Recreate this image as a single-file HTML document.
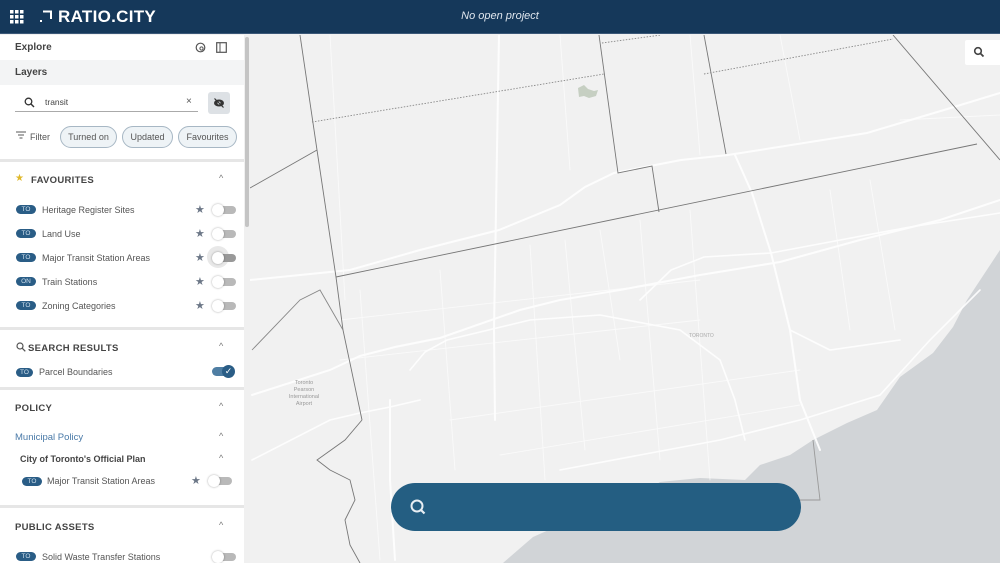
<!DOCTYPE html>
<html><head><meta charset="utf-8"><style>
*{box-sizing:border-box;margin:0;padding:0}
body{width:1000px;height:563px;overflow:hidden;font-family:"Liberation Sans",sans-serif;background:#f1f1f1;position:relative}
.hdr{position:absolute;left:0;top:0;width:1000px;height:34px;background:#15385a;border-bottom:1px solid #3b5878}
.hdr .t{position:absolute;left:0;width:1000px;top:10px;text-align:center;color:#dfe6ee;font-size:11px;font-style:italic}
.logo{position:absolute;left:58px;top:7px;color:#fff;font-weight:bold;font-size:17px;letter-spacing:0.3px}
.side{position:absolute;left:0;top:35px;width:250px;height:528px;background:#fff;overflow:hidden}
.sb{position:absolute;left:244px;top:0;width:6px;height:528px;background:#f0f0f0}
.sb div{position:absolute;left:1px;top:2px;width:4px;height:190px;background:#c4c4c4;border-radius:2px}
.a{position:absolute;font-size:9px;color:#555}
.h{position:absolute;font-size:9.5px;font-weight:bold;color:#444;letter-spacing:0.3px}
.tag{position:absolute;width:20px;height:9px;border-radius:5px;background:#2a5d86;color:#cfe0ee;font-size:6.5px;text-align:center;line-height:9.5px}
.tg{position:absolute;width:24px;height:10px}
.tg .tr{position:absolute;left:4px;top:1px;width:20px;height:8px;border-radius:4px;background:#b9b9b9}
.tg .kn{position:absolute;left:0;top:-1px;width:12px;height:12px;border-radius:6px;background:#fff;box-shadow:0 0 2px rgba(0,0,0,.35)}
.star{position:absolute;color:#6c7787;font-size:11px}
.car{position:absolute;left:219px;font-size:9px;color:#777}
.sep{position:absolute;left:0;width:244px;height:3px;background:#e6e6e6}
.chip{position:absolute;height:22px;border:1.5px solid #a7b7c4;border-radius:11px;background:#eef3f6;font-size:9px;color:#555;text-align:center;padding-top:5px;line-height:10px}
</style></head><body>
<svg style="position:absolute;left:250px;top:35px" width="750" height="528" viewBox="250 35 750 528">
<rect x="250" y="35" width="750" height="528" fill="#f1f1f1"/>
<polygon points="1000,250 967,300 953,327 933,353 900,377 877,410 847,423 813,440 790,455 760,465 745,480 700,478 660,482 640,495 600,515 560,525 533,537 503,563 1000,563" fill="#d1d4d7"/>
<g stroke="#fff" fill="none" stroke-linecap="round" opacity="0.9">
<polyline stroke-width="2" points="252,395 330,370 360,356 395,347 440,338 520,310 560,300 620,290 700,275 780,262 860,240 940,220 1000,200"/>
<polyline stroke-width="2" points="250,280 350,270 420,250 499,230 560,205 585,187 614,173 681,160 728,155 867,133 944,110 1000,93"/>
<polyline stroke-width="2" points="499,35 497,150 494,330 495,420"/>
<polyline stroke-width="2" points="735,155 752,193 771,253 790,330 800,400 820,450"/>
<polyline stroke-width="1.6" points="640,300 671,270 704,257 771,253 910,227 1000,213"/>
<polyline stroke-width="2" points="390,400 390,480 395,560"/>
<polyline stroke-width="1.6" points="410,370 425,352 447,340 530,320 600,315 680,330 720,360 735,400 745,440"/>
<polyline stroke-width="1.6" points="252,460 330,420 360,413 390,407 420,400"/>
<polyline stroke-width="1.6" points="560,470 640,455 720,440 800,420 880,395 930,340 980,290"/>
<polyline stroke-width="1.6" points="790,330 830,350 900,340"/>
<g stroke-width="0.9" opacity="0.7">
<line x1="330" y1="35" x2="345" y2="300"/><line x1="360" y1="290" x2="380" y2="560"/>
<line x1="440" y1="270" x2="455" y2="470"/><line x1="530" y1="245" x2="545" y2="480"/>
<line x1="565" y1="240" x2="585" y2="450"/><line x1="600" y1="230" x2="620" y2="360"/>
<line x1="640" y1="220" x2="660" y2="460"/><line x1="690" y1="210" x2="710" y2="480"/>
<line x1="830" y1="190" x2="850" y2="330"/><line x1="870" y1="180" x2="895" y2="330"/>
<line x1="340" y1="320" x2="700" y2="280"/><line x1="340" y1="360" x2="700" y2="320"/>
<line x1="450" y1="420" x2="800" y2="370"/><line x1="500" y1="455" x2="800" y2="405"/>
<line x1="690" y1="35" x2="700" y2="155"/><line x1="560" y1="35" x2="570" y2="170"/>
<line x1="780" y1="35" x2="800" y2="140"/><line x1="900" y1="120" x2="1000" y2="115"/>
</g></g>
<g stroke="#777" fill="none" stroke-width="0.9">
<polyline points="300,35 317,150 336,277 343,330 362,420"/>
<polyline points="250,188 317,150"/>
<polyline points="336,277 977,144"/>
<polyline points="599,35 618,173 652,166 659,212"/>
<polyline points="704,35 726,154"/>
<polyline points="893,35 1000,160"/>
<polyline points="362,420 345,440 317,460 330,470 350,480 355,500 345,520 350,545 360,563"/>
<polyline points="252,350 300,300 320,290 343,330" stroke="#888"/>
<polyline stroke-dasharray="1.5,1.5" stroke="#888" points="312,122 604,74"/>
<polyline stroke-dasharray="1.5,1.5" stroke="#888" points="704,74 893,39"/>
<polyline stroke-dasharray="1.5,1.5" stroke="#888" points="602,43 661,35"/>
<polyline stroke="#999" points="813,440 820,500 800,500"/>
</g>
<path d="M578,88 l6,-3 4,4 6,2 4,-1 -2,6 -7,2 -5,-2 -5,1z" fill="#c6cfc2"/>
<text x="689" y="337" font-size="5" fill="#aaa" font-family="Liberation Sans">TORONTO</text>
<text x="304" y="384" font-size="5.5" fill="#999" text-anchor="middle" font-family="Liberation Sans">Toronto</text>
<text x="304" y="391" font-size="5.5" fill="#999" text-anchor="middle" font-family="Liberation Sans">Pearson</text>
<text x="304" y="398" font-size="5.5" fill="#999" text-anchor="middle" font-family="Liberation Sans">International</text>
<text x="304" y="405" font-size="5.5" fill="#999" text-anchor="middle" font-family="Liberation Sans">Airport</text>
</svg>
<div style="position:absolute;left:965px;top:40px;width:35px;height:25px;background:#fff;border-radius:2px 0 0 2px"></div>
<svg style="position:absolute;left:973px;top:46px" width="12" height="12" viewBox="0 0 12 12"><circle cx="5" cy="5" r="3.3" fill="none" stroke="#444" stroke-width="1.6"/><line x1="7.5" y1="7.5" x2="10.5" y2="10.5" stroke="#444" stroke-width="1.8"/></svg>
<div style="position:absolute;left:391px;top:483px;width:410px;height:48px;background:#245e82;border-radius:24px"></div>
<svg style="position:absolute;left:409px;top:498px" width="18" height="18" viewBox="0 0 18 18"><circle cx="8" cy="8" r="5.5" fill="none" stroke="#e8eef3" stroke-width="2"/><line x1="12" y1="12" x2="15.5" y2="15.5" stroke="#e8eef3" stroke-width="2.2"/></svg>

<div class="hdr">
<svg style="position:absolute;left:10px;top:10px" width="14" height="14" viewBox="0 0 14 14" fill="#fff"><rect x="0" y="0" width="3.5" height="3.5"/><rect x="5" y="0" width="3.5" height="3.5"/><rect x="10" y="0" width="3.5" height="3.5"/><rect x="0" y="5" width="3.5" height="3.5"/><rect x="5" y="5" width="3.5" height="3.5"/><rect x="10" y="5" width="3.5" height="3.5"/><rect x="0" y="10" width="3.5" height="3.5"/><rect x="5" y="10" width="3.5" height="3.5"/><rect x="10" y="10" width="3.5" height="3.5"/></svg>
<svg style="position:absolute;left:39px;top:10px" width="14" height="14" viewBox="0 0 14 14"><path d="M4 1.5 H12 V9" fill="none" stroke="#fff" stroke-width="2"/><rect x="1" y="10" width="2" height="2" fill="#fff"/></svg>
<div class="logo">RATIO.CITY</div>
<div class="t">No open project</div>
</div>

<div class="side">
<div class="h" style="left:15px;top:7px;font-size:10px;letter-spacing:0">Explore</div>
<svg style="position:absolute;left:195px;top:7px" width="11" height="11" viewBox="0 0 11 11"><circle cx="5.5" cy="5.5" r="4.3" fill="none" stroke="#555" stroke-width="1.2"/><circle cx="6.5" cy="6.5" r="1.6" fill="none" stroke="#555"/></svg>
<svg style="position:absolute;left:216px;top:7px" width="11" height="11" viewBox="0 0 11 11"><rect x="0.7" y="0.7" width="9.6" height="9.6" fill="none" stroke="#555" stroke-width="1.2"/><line x1="4" y1="1" x2="4" y2="10" stroke="#555"/></svg>
<div style="position:absolute;left:0;top:25px;width:244px;height:25px;background:#f3f4f5"></div>
<div class="h" style="left:15px;top:32px;font-size:10px;letter-spacing:0">Layers</div>
<div style="position:absolute;left:15px;top:76px;width:183px;height:1px;background:#aaa"></div>
<svg style="position:absolute;left:24px;top:62px" width="11" height="11" viewBox="0 0 11 11"><circle cx="4.5" cy="4.5" r="3.3" fill="none" stroke="#333" stroke-width="1.3"/><line x1="7" y1="7" x2="10" y2="10" stroke="#333" stroke-width="1.4"/></svg>
<div class="a" style="left:45px;top:62px;font-size:8.5px;color:#444">transit</div>
<div class="a" style="left:186px;top:61px;font-size:10px;color:#555">×</div>
<div style="position:absolute;left:208px;top:57px;width:22px;height:22px;background:#dde1e5;border-radius:3px"></div>
<svg style="position:absolute;left:213px;top:63px" width="12" height="10" viewBox="0 0 12 10"><ellipse cx="6" cy="5" rx="5" ry="3.5" fill="#333"/><circle cx="6" cy="5" r="1.5" fill="#dde1e5"/><line x1="1.5" y1="0.5" x2="10.5" y2="9.5" stroke="#333" stroke-width="1.2"/></svg>
<svg style="position:absolute;left:16px;top:96px" width="10" height="8" viewBox="0 0 10 8"><g stroke="#666" stroke-width="1.1"><line x1="0" y1="1" x2="10" y2="1"/><line x1="2" y1="4" x2="8" y2="4"/><line x1="3.5" y1="7" x2="6.5" y2="7"/></g></svg>
<div class="a" style="left:30px;top:97px">Filter</div>
<div class="chip" style="left:60px;top:91px;width:57px">Turned on</div>
<div class="chip" style="left:122px;top:91px;width:51px">Updated</div>
<div class="chip" style="left:178px;top:91px;width:59px">Favourites</div>
<div class="sep" style="top:124px"></div>

<div class="a" style="left:15px;top:138px;color:#e0b92c;font-size:10px">★</div>
<div class="h" style="left:31px;top:140px">FAVOURITES</div><div class="car" style="top:138px">^</div>
<div class="tag" style="left:16px;top:170px">TO</div><div class="a" style="left:42px;top:170px">Heritage Register Sites</div><div class="star" style="left:195px;top:168px">★</div><div class="tg" style="left:212px;top:170px"><div class="tr"></div><div class="kn"></div></div>
<div class="tag" style="left:16px;top:194px">TO</div><div class="a" style="left:42px;top:194px">Land Use</div><div class="star" style="left:195px;top:192px">★</div><div class="tg" style="left:212px;top:194px"><div class="tr"></div><div class="kn"></div></div>
<div class="tag" style="left:16px;top:218px">TO</div><div class="a" style="left:42px;top:218px">Major Transit Station Areas</div><div class="star" style="left:195px;top:216px">★</div>
<div style="position:absolute;left:207px;top:211px;width:22px;height:22px;border-radius:11px;background:#e8e8e8"></div>
<div class="tg" style="left:212px;top:218px"><div class="tr" style="background:#999"></div><div class="kn"></div></div>
<div class="tag" style="left:16px;top:242px">ON</div><div class="a" style="left:42px;top:242px">Train Stations</div><div class="star" style="left:195px;top:240px">★</div><div class="tg" style="left:212px;top:242px"><div class="tr"></div><div class="kn"></div></div>
<div class="tag" style="left:16px;top:266px">TO</div><div class="a" style="left:42px;top:266px">Zoning Categories</div><div class="star" style="left:195px;top:264px">★</div><div class="tg" style="left:212px;top:266px"><div class="tr"></div><div class="kn"></div></div>
<div class="sep" style="top:292px"></div>

<svg style="position:absolute;left:16px;top:307px" width="10" height="10" viewBox="0 0 10 10"><circle cx="4" cy="4" r="3" fill="none" stroke="#555" stroke-width="1.2"/><line x1="6.3" y1="6.3" x2="9.3" y2="9.3" stroke="#555" stroke-width="1.3"/></svg>
<div class="h" style="left:28px;top:308px">SEARCH RESULTS</div><div class="car" style="top:306px">^</div>
<div class="tag" style="left:16px;top:333px;width:17px">TO</div><div class="a" style="left:39px;top:332px">Parcel Boundaries</div>
<div style="position:absolute;left:212px;top:332px;width:20px;height:9px;border-radius:5px;background:#4f7ea3"></div>
<div style="position:absolute;left:222px;top:330px;width:13px;height:13px;border-radius:7px;background:#2a5d86;color:#fff;font-size:9px;text-align:center;line-height:13px">✓</div>
<div class="sep" style="top:352px"></div>

<div class="h" style="left:15px;top:368px">POLICY</div><div class="car" style="top:366px">^</div>
<div class="a" style="left:15px;top:397px;color:#4a7aa8;font-size:9.5px">Municipal Policy</div><div class="car" style="top:396px">^</div>
<div class="a" style="left:20px;top:419px;font-weight:bold;color:#444;font-size:9px">City of Toronto's Official Plan</div><div class="car" style="top:418px">^</div>
<div class="tag" style="left:22px;top:442px">TO</div><div class="a" style="left:47px;top:441px">Major Transit Station Areas</div><div class="star" style="left:191px;top:439px">★</div><div class="tg" style="left:208px;top:441px"><div class="tr"></div><div class="kn"></div></div>
<div class="sep" style="top:470px"></div>

<div class="h" style="left:15px;top:487px">PUBLIC ASSETS</div><div class="car" style="top:485px">^</div>
<div class="tag" style="left:16px;top:517px">TO</div><div class="a" style="left:42px;top:517px">Solid Waste Transfer Stations</div><div class="tg" style="left:212px;top:517px"><div class="tr"></div><div class="kn"></div></div>
<div class="sb"><div></div></div>
</div>
</body></html>
